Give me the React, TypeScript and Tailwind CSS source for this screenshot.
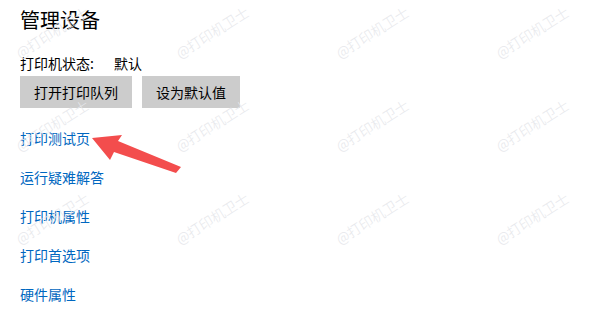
import React from 'react';

const links = ['运行疑难解答', '打印机属性', '打印首选项', '硬件属性'];

const App: React.FC = () => {
  return (
    <div
      className="relative w-[600px] h-[318px] overflow-hidden bg-white text-black"
      style={{ fontFamily: '"Noto Sans CJK SC", "Noto Sans", sans-serif' }}
    >
      <div className="flex flex-col items-start px-[20px]">
        <h1 className="mt-[6px] text-[20px] leading-[28px] font-normal">管理设备</h1>

        <div className="mt-[19px] flex text-[14px] leading-[20px]">
          <span className="w-[94px]">打印机状态:</span>
          <span>默认</span>
        </div>

        <div className="mt-[3px] flex gap-[10px]">
          <button className="h-[32px] px-[14px] bg-[#cccccc] text-[14px] leading-[20px]">打开打印队列</button>
          <button className="h-[32px] px-[14px] bg-[#cccccc] text-[14px] leading-[20px]">设为默认值</button>
        </div>

        <a className="mt-[20px] text-[14px] leading-[20px] text-[#0067c0]">打印测试页</a>
        {links.map((l) => (
          <a key={l} className="mt-[19px] text-[14px] leading-[20px] text-[#0067c0]">
            {l}
          </a>
        ))}
      </div>

      {/* red arrow annotation */}
      <svg className="absolute left-0 top-0 pointer-events-none" width="600" height="318">
        <polygon
          points="92,138 122,135 118,141 181,167 176,173 114,152 110,160"
          fill="#f34d4d"
          strokeLinejoin="round"
        />
      </svg>

      {/* watermark grid */}
      <div className="absolute left-[-28px] top-[-14px] grid grid-cols-[repeat(4,160px)] grid-rows-[repeat(3,93px)] pointer-events-none">
        {Array.from({ length: 12 }).map((_, i) => (
          <div key={i} className="flex items-center justify-center">
            <span className="-rotate-[32deg] whitespace-nowrap text-[14px] font-light text-[#e6e7eb]">@打印机卫士</span>
          </div>
        ))}
      </div>
    </div>
  );
};

export default App;
